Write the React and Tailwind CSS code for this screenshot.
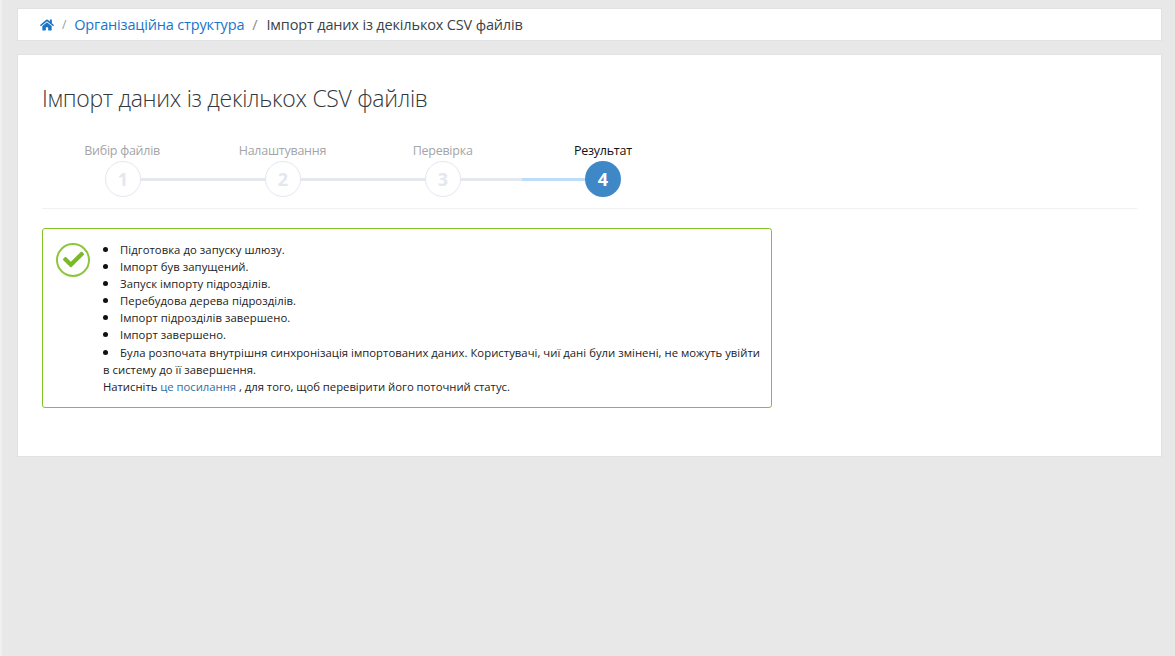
import { FaHome, FaCheck } from 'react-icons/fa';

const FONT = "font-['Open_Sans','Noto_Sans',sans-serif]";

const steps = [
  { label: 'Вибір файлів', n: 1 },
  { label: 'Налаштування', n: 2 },
  { label: 'Перевірка', n: 3 },
  { label: 'Результат', n: 4, active: true },
];

const messages = [
  'Підготовка до запуску шлюзу.',
  'Імпорт був запущений.',
  'Запуск імпорту підрозділів.',
  'Перебудова дерева підрозділів.',
  'Імпорт підрозділів завершено.',
  'Імпорт завершено.',
];

function Bullet() {
  return <span className="mr-[12px] inline-block h-[5px] w-[5px] rounded-full bg-[#111] align-[2px]" />;
}

function Stepper() {
  return (
    <div className="border-b border-[#f0f1f3] pb-[11px]">
      <div className="grid w-[641px] grid-cols-4 text-center text-[12.5px] leading-[18px] tracking-[-0.25px]">
        {steps.map((step) => (
          <div key={step.n} className={step.active ? 'text-[#111]' : 'text-[#a3a5a8]'}>
            {step.label}
          </div>
        ))}
      </div>
      <div className="mt-[1px] flex items-center pl-[63px]">
        {steps.map((step) => (
          <div key={step.n} className="flex items-center">
            {step.n > 1 && step.n < 4 && <div className="h-[3px] w-[124px] bg-[#e3e7ee]" />}
            {step.n === 4 && (
              <div className="flex h-[3px] w-[124px]">
                <div className="h-full w-[61px] bg-[#e3e7ee]" />
                <div className="h-full flex-1 bg-[#bcdcf8]" />
              </div>
            )}
            {step.active ? (
              <div className="flex h-[36px] w-[36px] items-center justify-center rounded-full bg-[#3f88c8] text-[18px] font-bold text-white">
                {step.n}
              </div>
            ) : (
              <div className="flex h-[36px] w-[36px] items-center justify-center rounded-full border border-[#e3e7ee] bg-white text-[18px] font-bold text-[#e3e7ee]">
                {step.n}
              </div>
            )}
          </div>
        ))}
      </div>
    </div>
  );
}

export default function App() {
  return (
    <div className={`${FONT} bg-[#f0f0f0] pl-[2px]`}>
      <div className="min-h-[656px] bg-[#e8e8e8] px-[15px] pt-[8px]">
        <nav className="flex h-[33px] w-[1145px] items-center border border-[#e0e2e4] bg-white pl-[22px] text-[14.5px] tracking-[-0.16px]">
          <FaHome className="h-[14px] w-[14px] text-[#1a75c9]" />
          <span className="mx-[8px] text-[12px] text-[#9a9a9a]">/</span>
          <a className="text-[#1a75c9]">Організаційна структура</a>
          <span className="ml-[8px] mr-[9px] text-[#8a8a8a]">/</span>
          <span className="text-[#3b4248]">Імпорт даних із декількох CSV файлів</span>
        </nav>

        <main className="mt-[13px] h-[403px] w-[1145px] border border-[#e0e2e4] bg-white px-[24px] pt-[27px]">
          <h1 className="text-[23px] font-light leading-[32px] tracking-[-0.3px] text-[#33383d]">
            Імпорт даних із декількох CSV файлів
          </h1>
          <div className="mt-[28px]">
            <Stepper />
          </div>

          <div className="mt-[19px] flex h-[180px] w-[730px] rounded-[3px] border border-[#84c225] pr-[9px] pt-[11.7px] text-[11.3px] leading-[17.14px] tracking-[-0.02px] text-[#222]">
            <div className="ml-[13px] mt-[2px] flex h-[34px] w-[34px] shrink-0 items-center justify-center rounded-full border-2 border-[#8cc63f]">
              <FaCheck className="h-[21px] w-[21px] text-[#7ab928]" />
            </div>
            <div className="ml-[13px] min-w-0 flex-1">
              <ul className="tracking-[0.05px]">
                {messages.map((message) => (
                  <li key={message}>
                    <Bullet />
                    {message}
                  </li>
                ))}
              </ul>
              <p className="tracking-[0.03px]">
                <Bullet />
                Була розпочата внутрішня синхронізація імпортованих даних. Користувачі, чиї дані були змінені, не можуть увійти в систему до її завершення.
              </p>
              <p>
                Натисніть <a className="text-[#2f6f9f]">це посилання</a> , для того, щоб перевірити його поточний статус.
              </p>
            </div>
          </div>
        </main>
      </div>
    </div>
  );
}
